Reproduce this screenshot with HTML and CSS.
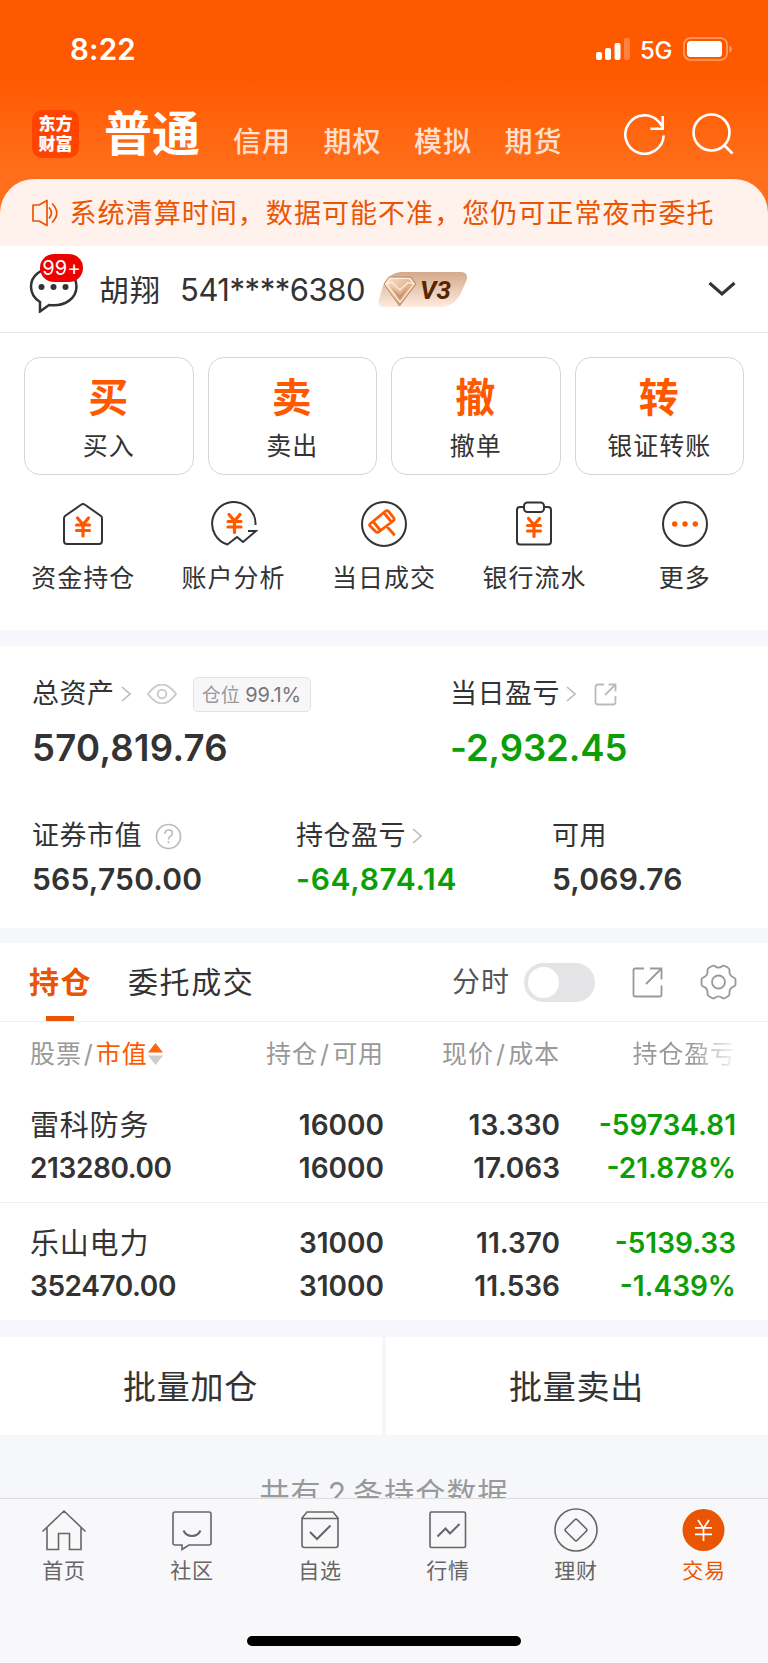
FILE: index.html
```html
<!DOCTYPE html>
<html lang="zh-CN">
<head>
<meta charset="utf-8">
<title>普通交易</title>
<link rel="stylesheet" href="styles.css">
</head>
<body>
<div class="app">
  <header class="top">
    <div class="status">
      <span class="clock">8:22</span>
      <div class="status-right">
        <svg width="34" height="24" viewBox="0 0 34 24" fill="#fff"><rect x="0" y="15" width="6" height="8" rx="2"/><rect x="9" y="11" width="6" height="12" rx="2"/><rect x="18.500" y="6" width="6" height="17" rx="2"/><rect x="28" y="1" width="6" height="22" rx="2" opacity=".25"/></svg>
        <span class="net">5G</span>
        <svg class="battery" width="50" height="24" viewBox="0 0 50 24"><rect x="1" y="1" width="43" height="22" rx="6.500" fill="none" stroke="#fff" stroke-opacity=".45" stroke-width="1.600"/><rect x="4" y="4" width="35" height="16" rx="3.500" fill="#fff"/><path d="M46.500 8.500c3 1 3 6 0 7z" fill="#fff" opacity=".5"/></svg>
      </div>
    </div>
    <nav class="modes">
      <div class="logo"><span>东方</span><span>财富</span></div>
      <span class="mode-on">普通</span>
      <span class="mode">信用</span><span class="mode">期权</span><span class="mode">模拟</span><span class="mode">期货</span>
      <svg class="refresh" width="42" height="42" viewBox="0 0 42 42" fill="none" stroke="#fff" stroke-width="2.600"><path d="M39.700 21.500A19.200 19.200 0 1 1 35.500 8.500L39 13.500M38.700 2v12.800H26.500"/></svg>
      <svg class="search" width="42" height="42" viewBox="0 0 42 42" fill="none" stroke="#fff" stroke-width="2.600"><circle cx="19.500" cy="19.500" r="18"/><path d="M31.500 31.500 40.500 40.500"/></svg>
    </nav>
    <div class="notice">
      <svg width="27" height="28" viewBox="0 0 27 28" fill="none" stroke="#ea5504" stroke-width="1.700" stroke-linejoin="round"><path d="M1 6h6l8-4.500v25L7 22H1zM17 8.500q5 5 0 11M20 4.500q9.500 9.500 0 19"/></svg>
      <span>系统清算时间，数据可能不准，您仍可正常夜市委托</span>
    </div>
  </header>

  <section class="account">
    <div class="chat">
      <svg width="49" height="48" viewBox="0 0 49 48"><path d="M24.500 3C12 3 2 11 2 21.500c0 7 3.500 12 9 15.500l0 9.500 9-6.500c17 2 27.500-7.500 27.500-18.500C47.500 11 37 3 24.500 3z" fill="none" stroke="#333" stroke-width="2.500"/><g fill="#333"><circle cx="12.500" cy="22" r="3"/><circle cx="24.500" cy="22" r="3"/><circle cx="36.500" cy="22" r="3"/></g></svg>
      <span class="badge">99+</span>
    </div>
    <span class="name">胡翔</span>
    <span class="acct">541****6380</span>
    <svg class="vip" width="90" height="36" viewBox="0 0 90 36"><defs><linearGradient id="vb" x1="0" y1="0" x2="0" y2="1"><stop offset="0" stop-color="#d3a98b"/><stop offset="1" stop-color="#ffebdf"/></linearGradient><linearGradient id="vg" x1="0" y1="0" x2="1" y2="1"><stop offset="0" stop-color="#ffe6d0"/><stop offset="1" stop-color="#c6875c"/></linearGradient></defs><path d="M23 0H82Q91 0 88.500 8.500L83 21Q76 35 62 35H6Q-1 35 1 27L5 14Q10 1 23 0z" fill="url(#vb)"/><path d="M11 5H33L38 12L21.500 34L6 12z" fill="url(#vg)" stroke="#c58a65" stroke-width="1"/><path d="M12.500 6.500H31.500L36 12 22 30 8 12zM8 12l6-1.500 8 7.500 8-7.500 6 1.500" fill="none" stroke="#fff1df" stroke-width="1.200"/><path d="M13 15l9 8 8-8-8 13z" fill="#bd7c52" opacity=".5"/><text x="42" y="27" class="vip-text">V3</text></svg>
    <svg class="chev" width="28" height="16" viewBox="0 0 28 16" fill="none" stroke="#333" stroke-width="3"><path d="M1.500 2 14 13 26.500 2"/></svg>
  </section>

  <section class="actions">
    <div class="act"><b>买</b><span>买入</span></div>
    <div class="act"><b>卖</b><span>卖出</span></div>
    <div class="act"><b>撤</b><span>撤单</span></div>
    <div class="act"><b>转</b><span>银证转账</span></div>
  </section>

  <section class="tools">
    <div class="tool">
      <svg width="48" height="48" viewBox="0 0 48 48" fill="none" stroke="#333" stroke-width="2"><path d="M22 4.800Q24 3.200 26 4.800L42 16Q43 17 43 18.500V41Q43 44 40 44H8Q5 44 5 41V18.500Q5 17 6 16z"/><path class="yen" d="M18.500 18 24 24.500 29.500 18M24 25v11M17.500 25h13M17.500 30.500h13"/></svg>
      <span>资金持仓</span></div>
    <div class="tool">
      <svg width="48" height="48" viewBox="0 0 48 48" fill="none" stroke="#333" stroke-width="2"><path d="M45.500 25A21.700 21.700 0 1 0 17.500 44.500L27 37 33 42 46 31H38"/><path class="yen" d="M19 14.500 24.500 21 30 14.500M24.500 21.500v11M18 21.500h13M18 27h13"/></svg>
      <span>账户分析</span></div>
    <div class="tool">
      <svg width="48" height="48" viewBox="0 0 48 48" fill="none" stroke="#333" stroke-width="2"><circle cx="24" cy="24" r="22"/><path d="M10.500 23.500 25 11.500Q27.500 9.500 29 12L33.500 17.500Q35 19.500 33 21L18.500 32Q16.500 33 15 31L10 26Q9 25 10.500 23.500zM14 22.500l6.500 8M24.500 13.500l6.500 8M26.500 26l7.500 8.500" stroke="#ff5900" stroke-width="2.800" stroke-linecap="round"/></svg>
      <span>当日成交</span></div>
    <div class="tool">
      <svg width="48" height="48" viewBox="0 0 48 48" fill="none" stroke="#333" stroke-width="2"><path d="M14 7H10Q7 7 7 10V41.500Q7 44.500 10 44.500H38Q41 44.500 41 41.500V10Q41 7 38 7H34"/><rect x="14" y="2.500" width="20" height="9.500" rx="3.500"/><path class="yen" d="M18.500 18.500 24 25 29.500 18.500M24 25.500v11M17.500 25.500h13M17.500 31h13"/></svg>
      <span>银行流水</span></div>
    <div class="tool">
      <svg width="48" height="48" viewBox="0 0 48 48" fill="none" stroke="#333" stroke-width="2"><circle cx="24" cy="24" r="22"/><g fill="#ff5900" stroke="none"><circle cx="13.700" cy="24" r="2.700"/><circle cx="24" cy="24" r="2.700"/><circle cx="34.300" cy="24" r="2.700"/></g></svg>
      <span>更多</span></div>
  </section>

  <section class="summary">
    <div class="sum-row first">
      <div class="sum">
        <div class="lab">总资产<svg class="gt" width="10" height="16" viewBox="0 0 10 16"><path d="M1 1l8 7-8 7"/></svg>
          <svg class="eye" width="30" height="20" viewBox="0 0 30 20" fill="none" stroke="#ccc" stroke-width="2"><path d="M1 10Q15-9 29 10Q15 29 1 10z"/><circle cx="15" cy="10" r="4.300"/></svg>
          <span class="pos">仓位 <i>99.1%</i></span></div>
        <div class="big">570,819.76</div>
      </div>
      <div class="sum">
        <div class="lab">当日盈亏<svg class="gt" width="10" height="16" viewBox="0 0 10 16"><path d="M1 1l8 7-8 7"/></svg>
          <svg class="out" width="23" height="23" viewBox="0 0 23 23" fill="none" stroke="#bbb" stroke-width="1.800"><path d="M10 1.500H4Q1.500 1.500 1.500 4V19Q1.500 21.500 4 21.500H19Q21.500 21.500 21.500 19V13M14.500 1.500h7v7M21.500 1.500 11 12"/></svg></div>
        <div class="big green">-2,932.45</div>
      </div>
    </div>
    <div class="sum-row second">
      <div class="sum"><div class="lab">证券市值<svg class="help" width="27" height="27" viewBox="0 0 27 27" fill="none" stroke="#bbb" stroke-width="1.700"><circle cx="13.500" cy="13.500" r="12"/><path d="M10 11q0-4 3.700-4 3.600 0 3.600 3.200 0 1.800-2 3-1.800 1-1.800 3.300M13.500 18.300v2"/></svg></div><div class="mid">565,750.00</div></div>
      <div class="sum"><div class="lab">持仓盈亏<svg class="gt" width="10" height="16" viewBox="0 0 10 16"><path d="M1 1l8 7-8 7"/></svg></div><div class="mid green">-64,874.14</div></div>
      <div class="sum"><div class="lab">可用</div><div class="mid">5,069.76</div></div>
    </div>
  </section>

  <section class="tabs">
    <span class="tab on">持仓</span>
    <span class="tab">委托成交</span>
    <span class="minute">分时</span>
    <span class="toggle"></span>
    <svg class="share" width="31" height="31" viewBox="0 0 31 31" fill="none" stroke="#999" stroke-width="1.800"><path d="M12 1.500H3Q1.500 1.500 1.500 3V28Q1.500 29.500 3 29.500H28Q29.500 29.500 29.500 28V18.500M18 1.500H29.500V12.500M29.500 1.500 14 17"/></svg>
    <svg class="gear" width="37" height="36" viewBox="0 0 37 36" fill="none" stroke="#999" stroke-width="1.800" stroke-linejoin="round"><path d="M12 2Q13.500 1 15 2.300Q18.500 5 22 2.300Q23.500 1 25 2L28 3.700Q29.700 4.700 29.500 6.500Q29 11.500 33.500 13.300Q35.500 14 35.500 15.500V20.500Q35.500 22 33.500 22.700Q29 24.500 29.500 29.500Q29.700 31.300 28 32.300L25 34Q23.500 35 22 33.700Q18.500 31 15 33.700Q13.500 35 12 34L9 32.300Q7.300 31.300 7.500 29.500Q8 24.500 3.500 22.700Q1.500 22 1.500 20.500V15.500Q1.500 14 3.500 13.300Q8 11.500 7.500 6.500Q7.300 4.700 9 3.700z"/><circle cx="18.500" cy="18" r="6.500"/></svg>
  </section>

  <section class="table">
    <div class="tr th">
      <div class="sort"><span>股票<em>/</em></span><span class="hot">市值</span><svg width="15" height="22" viewBox="0 0 15 22"><path d="M7.500 0 15 9.500H0z" fill="#ff6410"/><path d="M7.500 22 15 12.500H0z" fill="#ccc"/></svg></div>
      <div>持仓<em>/</em>可用</div><div>现价<em>/</em>成本</div><div class="fade">持仓盈亏</div>
    </div>
    <div class="tr">
      <div><span class="stock">雷科防务</span><span>213280.00</span></div>
      <div><span>16000</span><span>16000</span></div>
      <div><span>13.330</span><span>17.063</span></div>
      <div class="green"><span>-59734.81</span><span>-21.878%</span></div>
    </div>
    <div class="tr last">
      <div><span class="stock">乐山电力</span><span>352470.00</span></div>
      <div><span>31000</span><span>31000</span></div>
      <div><span>11.370</span><span>11.536</span></div>
      <div class="green"><span>-5139.33</span><span>-1.439%</span></div>
    </div>
  </section>

  <section class="batch"><div>批量加仓</div><div>批量卖出</div></section>
  <div class="count">共有 2 条持仓数据</div>

  <footer class="bar">
    <div class="items">
      <div class="item"><svg width="46" height="46" viewBox="0 0 46 46"><path d="M1.500 24.500 23 4 44.500 24.500M6 20.500V42.500H17.500V26.500H28.500V42.500H40V20.500"/></svg><span>首页</span></div>
      <div class="item"><svg width="46" height="46" viewBox="0 0 46 46"><path d="M6 5H40Q42 5 42 7V36Q42 38 40 38H20L13 42.500V38H6Q4 38 4 36V7Q4 5 6 5z"/><path d="M14.500 23.500Q17 29 23 29Q29 29 31.500 23.500" stroke-width="2"/></svg><span>社区</span></div>
      <div class="item"><svg width="46" height="46" viewBox="0 0 46 46"><path d="M10 5H36L41 11V38Q41 40.500 38.500 40.500H7.500Q5 40.500 5 38V11zM5 11.500H41"/><path d="M13 25 20 32 33.500 18.500" stroke-width="2"/></svg><span>自选</span></div>
      <div class="item"><svg width="46" height="46" viewBox="0 0 46 46"><rect x="5" y="5" width="35.500" height="35.500" rx="1.500"/><path d="M12.500 29.500 20.500 21.500 25 26.500 34.500 17" stroke-width="2"/></svg><span>行情</span></div>
      <div class="item"><svg width="46" height="46" viewBox="0 0 46 46"><circle cx="23" cy="23" r="21"/><path d="M21.800 12.700Q23 11.500 24.200 12.700L33.300 21.800Q34.500 23 33.300 24.200L24.200 33.300Q23 34.500 21.800 33.300L12.700 24.200Q11.500 23 12.700 21.800z"/></svg><span>理财</span></div>
      <div class="item active"><svg width="46" height="46" viewBox="0 0 46 46"><circle cx="22.500" cy="23" r="21" fill="#ea5504" stroke="none"/><path d="M17 13 22.500 21.500 28 13M22.500 21.500V34M14 20.800H31M14 27.300H31" stroke="#fff" stroke-width="1.700"/></svg><span>交易</span></div>
    </div>
    <div class="home"></div>
  </footer>
</div>
</body>
</html>
```
FILE: styles.css
```css
* { box-sizing: border-box; }
body { margin: 0; background: #f6f7fa; font-family: Inter, "Noto Sans CJK SC", sans-serif; color: #333; }
svg { display: block; flex: none; }
.app { width: 768px; height: 1663px; overflow: hidden; display: flex; flex-direction: column; white-space: nowrap; }
.app > * { flex: none; }

/* header */
.top { height: 246px; background: linear-gradient(#ff5900 0, #ff5900 76px, #ff6e1a 168px, #ff701c 246px); color: #fff; display: flex; flex-direction: column; }
.status { height: 98px; display: flex; justify-content: space-between; padding: 0 35px 0 70px; }
.clock { font-size: 29.500px; font-weight: 600; line-height: 98px; letter-spacing: .2px; }
.status-right { display: flex; padding-top: 37px; }
.net { font-size: 24px; font-weight: 500; line-height: 27px; margin-left: 10px; width: 43px; letter-spacing: -.4px; }
.modes { height: 81px; display: flex; padding-left: 32px; }
.logo { width: 47px; height: 48px; margin-top: 12px; border-radius: 10px; background: #ff4400; display: flex; flex-direction: column; align-items: center; padding-top: 4px; font-size: 17px; font-weight: 900; line-height: 20px; }
.mode-on { font-size: 48px; font-weight: 700; line-height: 72px; margin-left: 25px; width: 129px; }
.mode { font-size: 28px; font-weight: 500; line-height: 42px; margin-top: 23px; width: 90.500px; letter-spacing: 1px; color: #ffe0d0; }
.refresh { margin: 16px 0 0 29px; }
.search { margin: 15px 0 0 26px; }
.notice { height: 67px; border-radius: 34px 34px 0 0; background: #fff1eb; color: #ea5504; display: flex; padding: 20px 0 0 32px; font-size: 27px; letter-spacing: 1.050px; line-height: 30px; }
.notice svg { margin-right: 10.500px; }

/* account */
.account { height: 87px; background: #fff; border-bottom: 1px solid #e8e8e8; display: flex; padding-left: 29px; }
.chat { position: relative; padding-top: 19px; width: 70px; }
.badge { position: absolute; left: 11px; top: 8px; width: 43px; height: 28px; border-radius: 14px; background: #ee0000; color: #fff; font-size: 20px; line-height: 28px; text-align: center; letter-spacing: .2px; }
.name { font-size: 30px; letter-spacing: 1px; line-height: 88px; width: 81px; }
.acct { font-size: 31px; line-height: 88px; width: 198px; letter-spacing: -.45px; }
.vip { margin-top: 26px; }
.vip-text { font: italic 700 26px Roboto, sans-serif; fill: #592500; }
.chev { margin: 35px 0 0 240px; }

/* actions */
.actions { background: #fff; height: 142px; padding: 24px 24px 0; display: grid; grid-template-columns: repeat(4, 1fr); gap: 14px; }
.act { height: 118px; border: 1px solid #d6d6d6; border-radius: 16px; display: flex; flex-direction: column; align-items: center; }
.act b { font-size: 40px; font-weight: 700; line-height: 48px; color: #ff5900; margin: 16px 1px 0 0; }
.act span { font-size: 25px; letter-spacing: 1px; line-height: 30px; margin-top: 9px; }
.tools { background: #fff; height: 155px; padding: 25px 8px 0 8px; display: grid; grid-template-columns: repeat(5, 1fr); }
.tool { display: flex; flex-direction: column; align-items: center; font-size: 25px; letter-spacing: 1px; line-height: 30px; }
.tool span { margin-top: 15px; }
.yen { stroke: #ff5900; stroke-width: 3.200; stroke-linecap: round; }

/* summary */
.summary { background: #fff; margin-top: 16px; height: 282px; padding-left: 32px; }
.sum-row { display: grid; }
.first { grid-template-columns: 418px 1fr; height: 162px; padding-top: 30px; }
.second { grid-template-columns: 264px 256px 1fr; }
.lab { height: 36px; line-height: 36px; font-size: 27px; letter-spacing: .5px; display: flex; align-items: center; }
.gt { margin-left: 6px; fill: none; stroke: #bbb; stroke-width: 1.600; }
.eye { margin-left: 16px; }
.pos { margin-left: 16px; width: 118px; height: 35px; border: 1px solid #e3e3e6; border-radius: 5px; background: #f7f7fa; font-size: 19px; line-height: 34px; text-align: center; color: #999; letter-spacing: 0; }
.pos i { font-style: normal; color: #777; font-size: 20px; }
.out { margin-left: 18px; }
.help { margin-left: 13px; }
.big { font-size: 36.500px; font-weight: 600; line-height: 46px; margin-top: 13px; letter-spacing: .3px; }
.big.green { letter-spacing: -.1px; }
.mid { font-size: 30px; font-weight: 600; line-height: 38px; margin-top: 7px; letter-spacing: .2px; }
.mid.green { letter-spacing: .7px; }
.second .lab { margin-top: 10px; }
.second .mid { margin-top: 6px; }
.green { color: #0b9e06; }

/* holdings */
.tabs { background: #fff; margin-top: 15px; height: 79px; border-bottom: 1px solid #eee; display: flex; padding-left: 29px; }
.tab { font-size: 30px; letter-spacing: 1.600px; line-height: 79px; height: 78px; }
.tab.on { color: #ea5504; font-weight: 700; width: 99px; background: linear-gradient(#ea5504, #ea5504) 17px 73px / 28px 5px no-repeat; }
.minute { margin-left: auto; font-size: 28px; letter-spacing: 1px; line-height: 79px; color: #555; }
.toggle { width: 71px; height: 39px; border-radius: 20px; margin: 20px 37px 0 14px; background: #e4e4e6; padding: 4px; }
.toggle::before { content: ""; display: block; width: 31px; height: 31px; border-radius: 50%; background: #fff; }
.share { margin-top: 24px; }
.gear { margin: 21px 31px 0 37px; }
.table { background: #fff; height: 298px; }
.tr { display: grid; grid-template-columns: 200px 154px 176px 176px; padding: 22px 32px 0 30px; height: 121px; border-bottom: 1px solid #eee; font-size: 28px; font-weight: 600; line-height: 43px; text-align: right; }
.tr.last { height: 118px; border: 0; padding-top: 19px; }
.tr div { display: flex; flex-direction: column; }
.tr > div:first-child { text-align: left; letter-spacing: -.4px; }
.tr .stock { font-size: 29px; font-weight: 400; letter-spacing: .8px; }
.tr.th { height: 60px; border: 0; padding-top: 15px; font-size: 25px; font-weight: 400; line-height: 34px; color: #999; letter-spacing: 1px; }
.tr.th > div { display: block; letter-spacing: .9px; }
.tr.th > .sort { display: flex; flex-direction: row; align-items: center; height: 34px; }
.th em { font-style: normal; margin: 0 2.200px; }
.sort em { margin: 0 2px; }
.hot { color: #ff5900; }
.th .fade { background: linear-gradient(90deg, #999 75%, #fff 102%); background-clip: text; -webkit-background-clip: text; color: transparent; }

/* bottom */
.batch { margin-top: 17px; height: 98px; display: grid; grid-template-columns: 1fr 1fr; gap: 4px; }
.batch div { height: 98px; background: #fff; text-align: center; font-size: 33px; letter-spacing: .8px; line-height: 101px; padding-right: 1px; }
.count { height: 86px; margin-bottom: -23px; padding-top: 37px; text-align: center; font-size: 30px; letter-spacing: 1.100px; word-spacing: -3.500px; line-height: 42px; color: #999; }
.bar { position: relative; height: 165px; background: #f8f8fa; border-top: 1px solid #dcdcde; }
.items { display: grid; grid-template-columns: repeat(6, 128px); height: 137px; }
.item { display: flex; flex-direction: column; align-items: center; padding-top: 8px; font-size: 21px; letter-spacing: .7px; line-height: 28px; color: #666; }
.item svg { fill: none; stroke: #666; stroke-width: 1.600; }
.item span { margin-top: 4px; }
.item.active { color: #ea5504; }
.home { width: 274px; height: 10px; border-radius: 5px; background: #000; margin: 0 auto; }
```
